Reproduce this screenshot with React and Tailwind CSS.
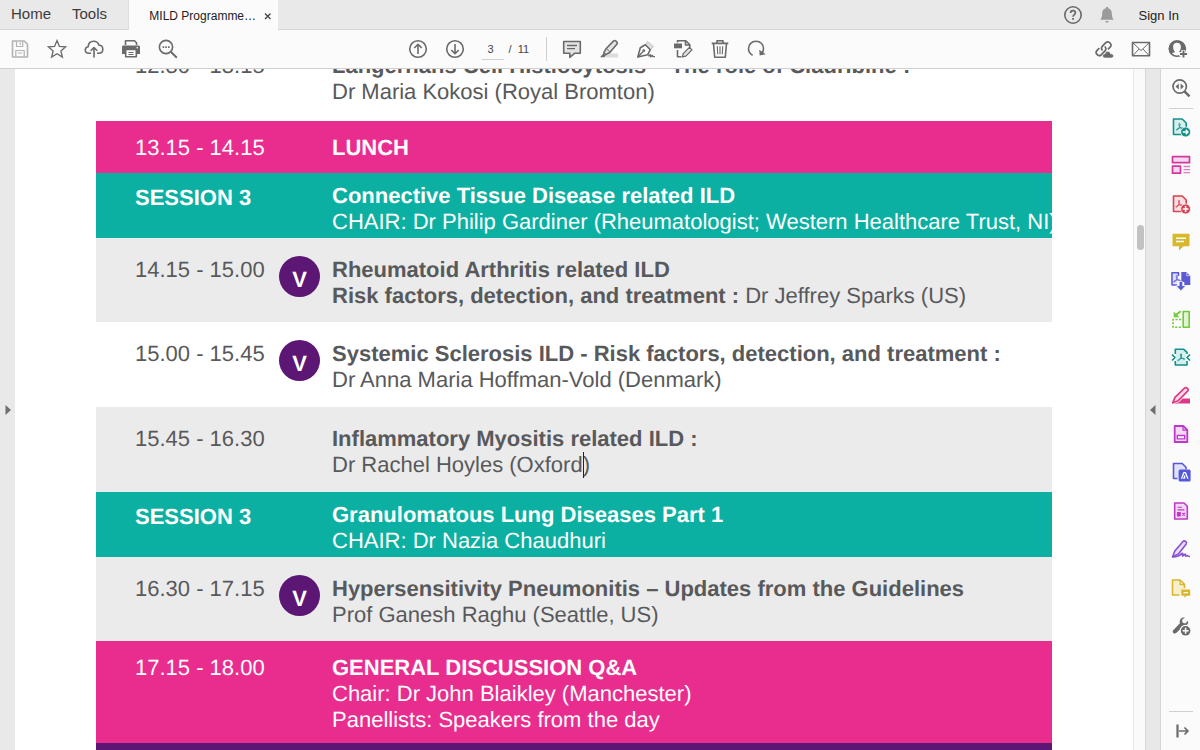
import React, { useState } from "react";

const ROWS = [
  {
    tone: "plain",
    height: "h-[68px]",
    pad: "pt-0",
    time: "12.30 - 13.15",
    lines: [
      { bold: "Langerhans Cell Histiocytosis – The role of Cladribine :" },
      { text: "Dr Maria Kokosi (Royal Bromton)" },
    ],
  },
  { tone: "pink", height: "h-[52px]", pad: "pt-[14px]", time: "13.15 - 14.15", lines: [{ bold: "LUNCH" }] },
  {
    tone: "teal",
    height: "h-[65px]",
    pad: "pt-[10px]",
    time: "SESSION 3",
    lines: [
      { bold: "Connective Tissue Disease related ILD" },
      { text: "CHAIR: Dr Philip Gardiner (Rheumatologist; Western Healthcare Trust, NI)" },
    ],
  },
  {
    tone: "grey",
    height: "h-[84px]",
    pad: "pt-[19px]",
    time: "14.15 - 15.00",
    virtual: true,
    lines: [
      { bold: "Rheumatoid Arthritis related ILD" },
      { bold: "Risk factors, detection, and treatment :", text: " Dr Jeffrey Sparks (US)" },
    ],
  },
  {
    tone: "plain",
    height: "h-[85px]",
    pad: "pt-[19px]",
    time: "15.00 - 15.45",
    virtual: true,
    lines: [
      { bold: "Systemic Sclerosis ILD - Risk factors, detection, and treatment :" },
      { text: "Dr Anna Maria Hoffman-Vold (Denmark)" },
    ],
  },
  {
    tone: "grey",
    height: "h-[85px]",
    pad: "pt-[19px]",
    time: "15.45 - 16.30",
    lines: [{ bold: "Inflammatory Myositis related ILD :" }, { text: "Dr Rachel Hoyles (Oxford", caret: true, after: ")" }],
  },
  {
    tone: "teal",
    height: "h-[65px]",
    pad: "pt-[10px]",
    time: "SESSION 3",
    lines: [{ bold: "Granulomatous Lung Diseases Part 1" }, { text: "CHAIR: Dr Nazia Chaudhuri" }],
  },
  {
    tone: "grey",
    height: "h-[84px]",
    pad: "pt-[19px]",
    time: "16.30 - 17.15",
    virtual: true,
    lines: [{ bold: "Hypersensitivity Pneumonitis – Updates from the Guidelines" }, { text: "Prof Ganesh Raghu (Seattle, US)" }],
  },
  {
    tone: "pink",
    height: "h-[102px]",
    pad: "pt-[14px]",
    time: "17.15 - 18.00",
    lines: [
      { bold: "GENERAL DISCUSSION Q&A" },
      { text: "Chair: Dr John Blaikley (Manchester)" },
      { text: "Panellists: Speakers from the day" },
    ],
  },
];

const TONES = {
  plain: "bg-white text-[#58595b]",
  grey: "bg-[#ebebeb] text-[#58595b]",
  pink: "bg-[#e92d8f] text-white",
  teal: "bg-[#0cb0a2] text-white",
};

function Icon({ children, className = "text-[#6a6a6a]" }) {
  return (
    <svg
      viewBox="0 0 20 20"
      className={`h-5 w-5 shrink-0 ${className}`}
      fill="none"
      stroke="currentColor"
      strokeWidth="1.6"
      strokeLinejoin="round"
      aria-hidden="true"
    >
      {children}
    </svg>
  );
}

function IconButton({ label, className, children }) {
  return (
    <button type="button" aria-label={label} className="flex h-6 w-6 shrink-0 items-center justify-center">
      <Icon className={className}>{children}</Icon>
    </button>
  );
}

// Acrobat's three-armed loop, used inside the page icons
function PdfMark({ x = 0, y = 0 }) {
  return (
    <path
      transform={`translate(${x} ${y})`}
      d="M3.4 0.3c.9 0 .8 1.8.2 3.3C3 5 1.9 7 .8 7.2-.3 7.3.5 5.7 3.3 5.1 5.5 4.6 7.3 4.9 7.1 5.6 6.9 6.3 4.7 5.3 3.6 3.6 2.9 2.3 2.7.4 3.4.3z"
      strokeWidth="0.9"
    />
  );
}

function TabBar() {
  return (
    <header className="flex h-[30px] shrink-0 items-stretch border-b border-[#d5d5d5] bg-[#e9e9e9] text-[#3c3c3c]">
      <nav className="flex items-center gap-[21px] pl-[11px] pr-[21px] text-[15px]">
        <button type="button">Home</button>
        <button type="button">Tools</button>
      </nav>
      <div className="-mb-px flex w-[150px] items-center justify-end gap-[6px] border-l border-[#dedede] bg-[#fbfbfb] pr-1 text-xs text-[#222]">
        <span className="whitespace-nowrap pt-[2px]">MILD Programme…</span>
        <button type="button" aria-label="Close tab" className="flex h-3 w-3 items-center justify-center pt-px">
          <svg viewBox="0 0 8 8" className="h-2 w-2" stroke="#444" strokeWidth="1.3" aria-hidden="true">
            <path d="M1 1.500l5.500 5.500M6.500 1.500L1 7" />
          </svg>
        </button>
      </div>
      <div className="ml-auto flex items-center pr-[21px]">
        <IconButton label="Help">
          <circle cx="10" cy="10" r="8.200" />
          <path d="M7.600 8.100c0-1.500 1-2.400 2.400-2.400s2.400.8 2.400 2.100c0 1.700-2.300 1.800-2.300 3.900" strokeWidth="1.700" />
          <path d="M9.100 12.900h1.900v1.900H9.100z" fill="currentColor" stroke="none" />
        </IconButton>
        <div className="ml-[10px] mr-5 flex">
          <IconButton label="Notifications" className="text-[#9b9b9b]">
            <path
              d="M10 2c.8 0 1.300.5 1.300 1.200 2.300.6 3.500 2.400 3.500 4.900 0 4 .8 5.400 2 6.700H3.200c1.200-1.300 2-2.700 2-6.700 0-2.500 1.200-4.300 3.500-4.900C8.700 2.500 9.200 2 10 2zM8.300 16h3.400c-.2 1-.8 1.600-1.700 1.600S8.500 17 8.300 16z"
              fill="currentColor"
              stroke="none"
            />
          </IconButton>
        </div>
        <button type="button" className="pt-[2px] text-[13px] font-medium text-[#222]">
          Sign In
        </button>
      </div>
    </header>
  );
}

function Toolbar() {
  const [page, setPage] = useState("3");
  return (
    <div className="flex h-[39px] shrink-0 items-center border-b border-[#cfcfcf] bg-[#fbfbfb]">
      <div className="flex flex-1 basis-0 gap-[13px] pl-2">
        <IconButton label="Save" className="text-[#b3b3b3]">
          <path d="M2.500 2h11.700l3.300 3.300V18h-15z" />
          <path d="M6.500 2.500v5h6.200v-5M10.200 3.500v2.500M5.800 17.500v-6h8.400v6M7.800 14h4.400" strokeWidth="1.200" />
        </IconButton>
        <IconButton label="Star">
          <path d="M10 1.600l2.400 5.700 6.300.5-4.800 4.100 1.500 6.200-5.400-3.400-5.400 3.400 1.500-6.200L1.300 7.800l6.300-.5z" strokeWidth="1.300" strokeLinejoin="miter" />
        </IconButton>
        <IconButton label="Upload to cloud">
          <path d="M7 14.300H5c-2.200 0-3.700-1.400-3.700-3.300 0-1.800 1.200-3 2.900-3.200.1-3.400 2.400-5.500 5.400-5.500 2.800 0 4.700 1.500 5.400 4 2.300 0 3.800 1.700 3.800 3.900 0 2.500-1.600 4.100-4 4.100H13" />
          <path d="M10 18.500V8.700M6.700 11.800L10 8.500l3.300 3.300" />
        </IconButton>
        <IconButton label="Print">
          <path d="M4.500 6V1.700h9l2 2V6" />
          <path d="M2.500 6.500h15c1 0 1.500.6 1.500 1.500v7h-3.500v-4h-11v4H1V8c0-.9.500-1.500 1.500-1.500z" fill="currentColor" stroke="none" />
          <path d="M4.700 10.500h10.600v7.300H4.700z" fill="#fff" />
          <path d="M7.500 13.500h5M7.500 15.500h5" strokeWidth="1" />
          <circle cx="16.200" cy="8.700" r=".8" fill="#fff" stroke="none" />
        </IconButton>
        <IconButton label="Find">
          <circle cx="8" cy="8" r="6.600" strokeWidth="1.600" />
          <path d="M12.800 12.800l6 5.900" strokeWidth="2" />
          <path d="M4.600 7.300h1.600v1.600H4.600zM7.300 7.300h1.600v1.600H7.300zM10 7.300h1.600v1.600H10z" fill="currentColor" stroke="none" />
        </IconButton>
      </div>

      <div className="flex items-center gap-[13px] pr-6">
        <IconButton label="Previous page">
          <circle cx="10" cy="10" r="8.300" />
          <path d="M10 15V5.500M6.300 9L10 5.300 13.700 9" strokeWidth="1.600" />
        </IconButton>
        <IconButton label="Next page">
          <circle cx="10" cy="10" r="8.300" />
          <path d="M10 5v9.500M6.300 11l3.700 3.700 3.700-3.700" strokeWidth="1.600" />
        </IconButton>
        <div className="ml-[2px] flex items-center text-[11px] text-[#444]">
          <input
            aria-label="Page number"
            value={page}
            onChange={(e) => setPage(e.target.value)}
            className="h-[22px] w-[22px] border-b border-[#cfcfcf] bg-transparent pr-1 text-center outline-none"
          />
          <span className="w-7 whitespace-nowrap pl-[5px]">/ &nbsp;11</span>
        </div>
        <div className="ml-[1px] h-6 w-px bg-[#cfcfcf]" />
        <IconButton label="Add comment">
          <path d="M1.700 2.500h16.600v11.800h-5.800l-4.700 4v-4H1.700z" fill="#e4e4e4" />
          <path d="M5 6.500h10M5 9.700h8" strokeWidth="1.300" />
        </IconButton>
        <IconButton label="Highlight">
          <path d="M9 14.500h10v4H5z" fill="#dcdcdc" stroke="none" />
          <path d="M7 9.800L14.700 1.900c1.300-1.200 4.500 1.500 3.300 3L11 13.300z" fill="#e4e4e4" />
          <path d="M7 9.800l-2.300 4 2.200 1.800 4.100-2.300" fill="#e4e4e4" />
          <path d="M4.300 14.500L1 18.200h4.300l1.500-2z" fill="currentColor" stroke="none" />
        </IconButton>
        <IconButton label="Sign">
          <path d="M9.500 5.500l2-3 5.800 5-3 3.200z" fill="#dedede" stroke="#bdbdbd" strokeWidth="1" />
          <path d="M1.800 18l2.500-9.300 5-3 5 5-2.700 5.100z" fill="#fff" />
          <path d="M2 18l5-5.500" strokeWidth="1.300" />
          <circle cx="7.800" cy="11.700" r="1.400" fill="currentColor" stroke="none" />
          <path d="M12.300 17.300c1.300-1.200 2-2 2.300-1.500.4.600-.7 1.900.2 1.900s1.200-1.400 1.700-1.200c.4.300 0 1.100.6 1.100H19" strokeWidth="1.400" />
        </IconButton>
        <IconButton label="Edit PDF">
          <path d="M4.500 3.500V1.700h8.300l4 4v3M12.500 2v4h4M4.500 11v6.800h4" />
          <path d="M1 4.500h8v4.800H1z" fill="currentColor" stroke="none" />
          <path d="M9.500 17.800l.7-3.200 6.200-6.200 2.600 2.500-6.200 6.200z" fill="#e4e4e4" strokeWidth="1.300" />
        </IconButton>
        <IconButton label="Delete">
          <path d="M1.700 4.400h16.600M7 4.200V1.800h6v2.400M3.500 4.500l1.200 13.700h10.600l1.200-13.700" />
          <path d="M7.300 7.300l.4 8M10 7.300v8M12.700 7.300l-.4 8" strokeWidth="1.100" />
        </IconButton>
        <IconButton label="Rotate">
          <path d="M5.600 16.300C2.900 14.700 1.500 12.500 1.500 9.800c0-4.500 3.300-7.600 7.500-7.600s7.500 3 7.500 7.300c0 1.800-.6 3.700-1.800 5.200" strokeWidth="1.600" />
          <path d="M12.200 10.700l.5 5.700 6.100-1.100z" fill="currentColor" stroke="none" />
        </IconButton>
      </div>

      <div className="flex flex-1 basis-0 justify-end gap-[13px] pr-[10px]">
        <IconButton label="Share link">
          <path d="M8.500 11.500c-1.500-1.500-1.300-3 0-4.300l3.300-3.500c2.500-2.400 6.800 1.300 4.500 4.200l-2.300 2.500M10.700 7.500c1.500 1.400 1.500 3 .3 4.300l-3.800 4c-2.500 2.500-6.700-1.400-4.300-4.200l2.400-2.600" strokeWidth="1.700" />
          <path d="M11 19c-3.300 0-3-4.500 0-4.200.8-3.400 5-3.200 5.600 0 3.600-.4 3.900 4.200.8 4.200z" fill="currentColor" stroke="#fbfbfb" strokeWidth=".6" />
        </IconButton>
        <IconButton label="Send by email">
          <path d="M1.500 3.500h17v13.300h-17z" />
          <path d="M2 4l8 7.500L18 4M2 16.500l6-6.500M18 16.500L12 10" strokeWidth="1" />
        </IconButton>
        <IconButton label="Share with others">
          <circle cx="9" cy="9.700" r="7.600" />
          <path d="M9 1.500a8.200 8.200 0 0 0-6.200 13.600c1-1.500 3.400-1.400 4.200-2.200-1.300-1.300-1.900-3.200-1.900-5.200 0-2.400 1.500-4 3.900-4s3.900 1.600 3.900 4c0 2-.6 3.900-1.900 5.200l1 .8h5A8.200 8.200 0 0 0 9 1.500z" fill="currentColor" stroke="none" />
          <path d="M11.300 15h8M15.300 11v8" stroke="#fbfbfb" strokeWidth="4" />
          <path d="M12 15h7M15.500 11.500v7" strokeWidth="1.900" />
        </IconButton>
      </div>
    </div>
  );
}

function Line({ line }) {
  return (
    <p className="whitespace-nowrap">
      {line.bold && <strong className="font-bold">{line.bold}</strong>}
      {line.text}
      {line.caret && (
        <span className="relative">
          <span className="absolute left-0 top-0 h-[26px] w-px bg-[#222]" />
        </span>
      )}
      {line.after}
    </p>
  );
}

function Programme() {
  return (
    <table className="-mt-4 w-full table-fixed border-collapse text-[22px] leading-[26px] [text-rendering:geometricPrecision]">
      <colgroup>
        <col className="w-[183px]" />
        <col className="w-[53px]" />
        <col />
      </colgroup>
      <tbody>
        {ROWS.map((row) => (
          <tr key={row.time + row.lines[0].bold} className={`${row.height} ${TONES[row.tone]}`}>
            <th
              scope="row"
              className={`whitespace-nowrap pl-[39px] text-left align-top ${
                row.tone === "teal" ? "pt-[12px] font-bold" : `${row.pad} font-normal`
              }`}
            >
              {row.time}
            </th>
            <td className="pt-[18px] align-top">
              {row.virtual && (
                <span className="flex h-[41px] w-[41px] items-center justify-center rounded-full bg-[#5c1673] pt-[6px] font-bold text-white">
                  V
                </span>
              )}
            </td>
            <td className={`align-top ${row.pad}`}>
              {row.lines.map((line, i) => (
                <Line key={i} line={line} />
              ))}
            </td>
          </tr>
        ))}
        <tr className="h-10 bg-[#5c1673]">
          <td colSpan={3} />
        </tr>
      </tbody>
    </table>
  );
}

function ToolsPane() {
  return (
    <aside className="flex w-[39px] shrink-0 flex-col items-center bg-[#fbfbfb] pt-[7px]">
      <IconButton label="Search tools">
        <circle cx="8.700" cy="8.500" r="6.700" strokeWidth="1.700" />
        <path d="M13.500 13.300l5 5" strokeWidth="2.400" />
        <path d="M7.800 5.500v6L4.500 8.500zM9.600 5.500v6l3.300-3z" fill="currentColor" stroke="none" />
      </IconButton>
      <div className="mb-[6px] mt-[8px] h-px w-6 shrink-0 bg-[#cfcfcf]" />
      <div className="flex h-[523px] shrink-0 flex-col justify-between">
        <IconButton label="Export PDF" className="text-[#12908a]">
          <path d="M2.500 2h8.700l4 4v11.500H2.500z" fill="#d6efed" />
          <PdfMark x={5} y={6} />
          <circle cx="14.600" cy="15" r="5" fill="currentColor" stroke="#fbfbfb" strokeWidth=".8" />
          <path d="M11.800 15h5M14.800 12.800L17 15l-2.200 2.200" stroke="#fff" strokeWidth="1.400" />
        </IconButton>
        <IconButton label="Organize pages" className="text-[#cf3aa0]">
          <path d="M1.500 1.700h17v6h-17zM1.500 11.200h8v7h-8z" fill="#f8d7ee" strokeWidth="1.700" />
          <path d="M12.500 11.500H19M12.500 14.600H19M12.500 17.700H19" strokeWidth="1.300" stroke="#dc7bbf" />
        </IconButton>
        <IconButton label="Create PDF" className="text-[#d93f50]">
          <path d="M2.500 2h8.700l4 4v11.500H2.500z" fill="#fbe0e2" />
          <PdfMark x={4.5} y={6} />
          <circle cx="14.600" cy="15" r="5" fill="currentColor" stroke="#fbfbfb" strokeWidth=".8" />
          <path d="M11.700 15h5.800M14.600 12.100v5.800" stroke="#fff" strokeWidth="1.600" />
        </IconButton>
        <IconButton label="Comment" className="text-[#d8b72f]">
          <path d="M2.500 1.700h15c.6 0 1 .4 1 1v10.600c0 .6-.4 1-1 1h-5L8 18.500v-4.200H2.500c-.6 0-1-.4-1-1V2.700c0-.6.4-1 1-1z" fill="currentColor" stroke="none" />
          <path d="M5 6.200h10M5 9.600h8" stroke="#fff" strokeWidth="1.500" />
        </IconButton>
        <IconButton label="Combine files" className="text-[#5c5bd6]">
          <path d="M6 14H1V1.800h6.500V5" fill="#e1e1fa" />
          <path d="M10.300 1h5l4 4v9h-6v-3h-3z" fill="currentColor" stroke="none" />
          <path d="M15.700 1.500v3.200h3.300" stroke="#d8d8fa" strokeWidth=".8" />
          <PdfMark x={2.2} y={4} />
          <path d="M8.200 10.500h3.400v4.200h3.200L9.900 19.800l-4.900-5.100h3.200z" fill="currentColor" stroke="#fbfbfb" strokeWidth=".6" />
        </IconButton>
        <IconButton label="Compare files" className="text-[#72c83e]">
          <path d="M12.200 2.500h6v15.700h-6z" fill="#def5cf" />
          <path d="M10.200 10.500H2v7.700h8.200" strokeDasharray="2.200 1.400" />
          <path d="M9.700 2.300L5 5.700" strokeWidth="2" />
          <path d="M2.700 2.700v5.500h6z" fill="currentColor" stroke="none" />
        </IconButton>
        <IconButton label="Compress PDF" className="text-[#12908a]">
          <path d="M5 7h10v7H5z" fill="#d6efed" stroke="none" />
          <path d="M4.300 7V2.300h8.500l3.200 3V7M4.300 14v4H16v-4" fill="#d6efed" />
          <path d="M1 7.500l3 3-3 3M19 7.500l-3 3 3 3" strokeWidth="1.700" />
          <PdfMark x={6.5} y={6.5} />
        </IconButton>
        <IconButton label="Redact" className="text-[#db3a86]">
          <path d="M1 17.600l2.500-5.100h15.500v5.100z" fill="currentColor" stroke="none" />
          <path d="M4 11.300L13.800 1.900c1.500-1.200 4.300 1.500 3 3L7.300 14.700 2.700 16z" fill="#fadbe9" stroke="#fbfbfb" strokeWidth="3.200" />
          <path d="M4 11.300L13.800 1.900c1.500-1.200 4.300 1.500 3 3L7.300 14.700 1.700 16.800z" fill="#fadbe9" strokeWidth="1.700" />
        </IconButton>
        <IconButton label="Fill form" className="text-[#bd38c8]">
          <path d="M3.700 2h8.600l4 4v12H3.700z" fill="#f5daf7" strokeWidth="1.800" />
          <path d="M12 2v4.200h4" strokeWidth="1.200" />
          <path d="M6.300 11.500h7.400v3.400H6.300z" fill="#fff" strokeWidth="1.400" />
        </IconButton>
        <IconButton label="Scan and OCR" className="text-[#5558d8]">
          <path d="M6.500 16.500h-4v-15h8.700L15 5.300v2" fill="#e1e1fa" />
          <rect x="7.600" y="7.500" width="12" height="12" rx="1.500" fill="currentColor" stroke="none" />
          <path d="M10.500 16.800l2.400-6.200h1.500l2.500 6.200M13.600 13.500v2.600h-1.500" stroke="#fff" strokeWidth="1.300" />
        </IconButton>
        <IconButton label="Prepare form" className="text-[#bd38c8]">
          <path d="M3.700 2h9.300l3.300 3.300V18H3.700z" fill="#f5daf7" />
          <path d="M6.500 6.300h4.500M6.500 8.900h7" strokeWidth="1.100" />
          <path d="M6.500 11.700h2.700V15H6.500zM11.300 12l2.700 2.700M14 12l-2.700 2.700" strokeWidth="1.200" fill="currentColor" />
        </IconButton>
        <IconButton label="Request signatures" className="text-[#8a50d6]">
          <path d="M1.500 18l2.300-5.900L12 2.400c1.500-1.400 4.500.8 3.200 2.600L7.400 14.900z" fill="#eadffa" />
          <path d="M1.500 18c4-.2 7.500-1.500 9.200-3.400.7-.7 1.400-.1 1 .7-.6 1.300-.3 2.300.8 1.200 1.100-1.200 2.300-2 1.900-.5-.3 1.200.7 1.500 1.500.7.700-.6.900.8 3.100.8" strokeWidth="1.600" />
        </IconButton>
        <IconButton label="Send for comments" className="text-[#d8b72f]">
          <path d="M8.500 17h-7V2h7.700l4.300 4.300v4" fill="#f8f0cd" />
          <path d="M9 2v4.500h4.300" strokeWidth="1.300" />
          <path d="M10.300 11.500h8.900v6.300h-3.400l-2.300 2v-2h-3.200z" fill="currentColor" stroke="none" />
          <path d="M12.500 14.700h4.500" stroke="#fff" strokeWidth="1.200" />
        </IconButton>
        <IconButton label="More tools">
          <path d="M13.800 1.200l-2.700 2.900.6 2.600 2.600.7L17 4.800c.8 3.100-1.700 6-4.700 5.400l-7.100 6.900c-2 1.500-4.500-.8-3-2.900l6.700-7C8 3.800 10.700.8 13.800 1.200z" fill="currentColor" stroke="none" />
          <circle cx="14.600" cy="14.800" r="4.500" fill="#fbfbfb" stroke="#fbfbfb" strokeWidth="3" />
          <circle cx="14.600" cy="14.800" r="4.800" fill="currentColor" stroke="none" />
          <path d="M11.600 14.800h6M14.600 11.800v6" stroke="#fff" strokeWidth="1.500" />
        </IconButton>
      </div>
      <div className="mb-[7px] mt-auto h-px w-6 shrink-0 bg-[#cfcfcf]" />
      <div className="mb-[7px]">
        <IconButton label="Collapse tools pane">
          <path d="M6.500 3.500v13" strokeWidth="2.200" />
          <path d="M8 10h9M13.500 6.500L17 10l-3.500 3.500" strokeWidth="1.700" />
        </IconButton>
      </div>
    </aside>
  );
}

export default function App() {
  return (
    <div className="flex h-screen flex-col overflow-hidden bg-white font-['Liberation_Sans',Arial,sans-serif]">
      <TabBar />
      <Toolbar />
      <div className="flex min-h-0 flex-1">
        <button
          type="button"
          aria-label="Show navigation pane"
          className="flex w-[15px] shrink-0 items-center justify-center bg-[#e9e9e9]"
        >
          <svg viewBox="0 0 6 10" className="h-[10px] w-[6px]" fill="#6e6e6e" aria-hidden="true">
            <path d="M0.500 0v10L6 5z" />
          </svg>
        </button>

        <main className="min-w-0 flex-1 overflow-hidden px-[81px]">
          <Programme />
        </main>

        {/* Scrollbar */}
        <div className="w-3 shrink-0 border-l border-[#e8e8e8] bg-[#fafafa] pl-[3px] pt-[156px]">
          <div className="h-[25px] w-[7px] rounded-full bg-[#c2c2c2]" />
        </div>

        <button
          type="button"
          aria-label="Hide tools pane"
          className="flex w-4 shrink-0 items-center justify-center border-x border-[#d6d6d6] bg-[#e8e8e8]"
        >
          <svg viewBox="0 0 6 10" className="h-[10px] w-[6px]" fill="#6e6e6e" aria-hidden="true">
            <path d="M5.500 0v10L0 5z" />
          </svg>
        </button>

        <ToolsPane />
      </div>
    </div>
  );
}
